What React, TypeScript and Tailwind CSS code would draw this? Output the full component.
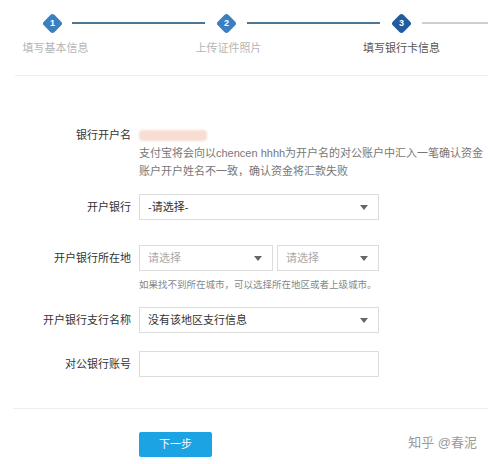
import React from 'react';

const steps = [
  { n: '1', label: '填写基本信息', active: false },
  { n: '2', label: '上传证件照片', active: false },
  { n: '3', label: '填写银行卡信息', active: true },
];

function Diamond({ n, dark }: { n: string; dark?: boolean }) {
  return (
    <div className="w-[20px] h-[20px] flex items-center justify-center shrink-0">
      <div
        className={`w-[15px] h-[15px] rotate-45 rounded-[3px] flex items-center justify-center ${
          dark ? 'bg-[#225c9f]' : 'bg-[#3b7fc3]'
        }`}
      >
        <span className="-rotate-45 text-white text-[9px] font-bold leading-none">{n}</span>
      </div>
    </div>
  );
}

function Caret() {
  return (
    <svg width="8" height="5" viewBox="0 0 8 5" className="shrink-0">
      <path d="M0 0 L8 0 L4 5 Z" fill="#666" />
    </svg>
  );
}

function Select({ text, muted, className = '' }: { text: string; muted?: boolean; className?: string }) {
  return (
    <div
      className={`h-[26px] border border-[#dcdcdc] flex items-center justify-between pl-[8px] pr-[10px] ${className}`}
    >
      <span className={`text-[11px] ${muted ? 'text-[#aaa]' : 'text-[#333]'}`}>{text}</span>
      <Caret />
    </div>
  );
}

function Row({ label, children, center = true }: { label: string; children: React.ReactNode; center?: boolean }) {
  return (
    <div className={`flex ${center ? 'items-center' : 'items-start'}`}>
      <div className="w-[131px] text-right text-[11px] text-[#333] leading-[18px] shrink-0">{label}</div>
      <div className="ml-[8px] flex-1">{children}</div>
    </div>
  );
}

export default function App() {
  return (
    <div
      className="w-[488px] h-[464px] bg-white overflow-hidden"
      style={{ fontFamily: '"Liberation Sans", "Noto Sans CJK SC", sans-serif' }}
    >
      {/* steps */}
      <div className="pt-[13px]">
        <div className="flex items-center">
          <div className="ml-[42px]" />
          <Diamond n="1" />
          <div className="ml-[10px] w-[133px] h-[2px] bg-[#4d7695]" />
          <div className="ml-[11px]" />
          <Diamond n="2" />
          <div className="ml-[11px] w-[133px] h-[2px] bg-[#4d7695]" />
          <div className="ml-[11px]" />
          <Diamond n="3" dark />
          <div className="ml-[11px] flex-1 h-[2px] bg-[#cfcfcf]" />
        </div>
        <div className="flex ml-[-31px] mt-[8px]">
          {steps.map((s) => (
            <div
              key={s.n}
              className={`w-[174px] text-center text-[11px] leading-[14px] ${
                s.active ? 'text-[#555]' : 'text-[#b5b5b5]'
              }`}
            >
              {s.label}
            </div>
          ))}
        </div>
        <div className="ml-[15px] mt-[20px] h-px bg-[#eeeeee]" />
      </div>

      {/* form */}
      <div className="mt-[50px] flex flex-col">
        <Row label="银行开户名" center={false}>
          <div className="h-[18px] flex items-center">
            <div className="w-[68px] h-[11px] rounded-[4px] bg-[#f7ddd2] blur-[1px]" />
          </div>
          <div className="text-[11px] leading-[18px] text-[#777] whitespace-nowrap">
            支付宝将会向以chencen hhhh为开户名的对公账户中汇入一笔确认资金
          </div>
          <div className="text-[11px] leading-[18px] text-[#777] whitespace-nowrap">
            账户开户姓名不一致，确认资金将汇款失败
          </div>
        </Row>

        <div className="mt-[14px]">
          <Row label="开户银行">
            <Select text="-请选择-" className="w-[240px]" />
          </Row>
        </div>

        <div className="mt-[25px]">
          <Row label="开户银行所在地">
            <div className="flex gap-[4px]">
              <Select text="请选择" muted className="w-[134px]" />
              <Select text="请选择" muted className="w-[102px]" />
            </div>
          </Row>
          <div className="ml-[139px] mt-[7px] text-[9.5px] leading-[14px] text-[#888] whitespace-nowrap">
            如果找不到所在城市，可以选择所在地区或者上级城市。
          </div>
        </div>

        <div className="mt-[15px]">
          <Row label="开户银行支行名称">
            <Select text="没有该地区支行信息" className="w-[240px]" />
          </Row>
        </div>

        <div className="mt-[18px]">
          <Row label="对公银行账号">
            <div className="w-[240px] h-[26px] border border-[#dcdcdc]" />
          </Row>
        </div>

        <div className="ml-[13px] mt-[31px] h-px bg-[#eeeeee]" />

        <div className="mt-[23px] flex items-center">
          <button className="ml-[139px] w-[73px] h-[25px] rounded-[2px] bg-[#1ca3e3] text-white text-[11px]">
            下一步
          </button>
          <div className="ml-auto mr-[11px] -mt-[4px] text-[13px] text-[#9a9a9a]">知乎 @春泥</div>
        </div>
      </div>
    </div>
  );
}
